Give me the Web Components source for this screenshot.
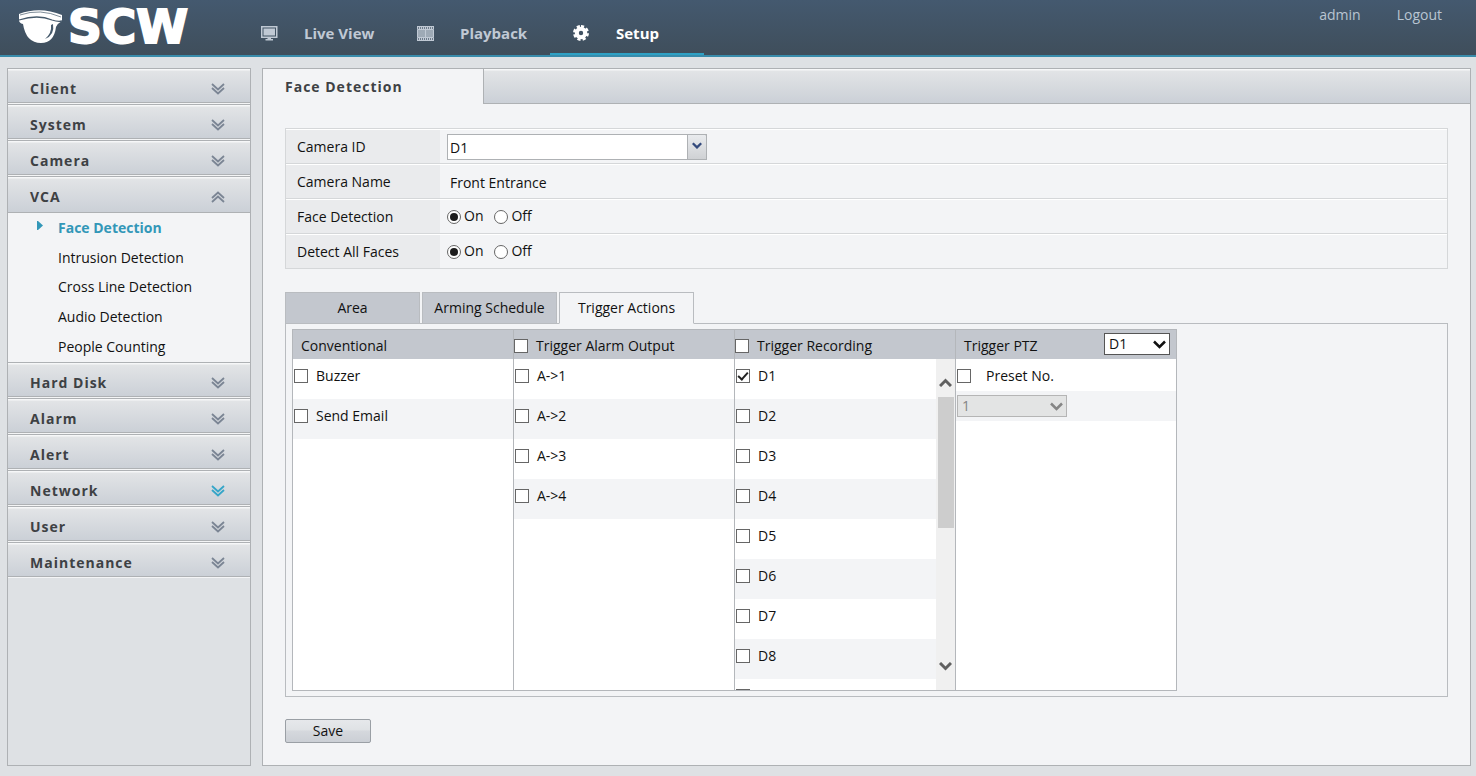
<!DOCTYPE html>
<html lang="en">
<head>
<meta charset="utf-8">
<title>Setup - Face Detection</title>
<style>
html, body { margin: 0; }
body {
  min-height: 100vh; display: flex; background: #dee1e4; color: #111;
  font: 14px/20px "Open Sans", "Noto Sans", sans-serif;
}
nvr-app { flex: 1; }
</style>
</head>
<body>
<nvr-app></nvr-app>
<script>
const define = (name, html, setup) => customElements.define(name, class extends HTMLElement {
  constructor() {
    super();
    const template = document.createElement('template');
    template.innerHTML = html;
    this.attachShadow({ mode: 'open' }).append(template.content.cloneNode(true));
  }
  connectedCallback() { if (setup) setup(this, this.shadowRoot); }
});

/* Brand: dome camera and wordmark */
define('brand-logo', `
<style>
:host { display: flex; align-items: center; gap: 4px; color: #fff; }
svg { display: block; }
span { font: bold 47px/46px "DejaVu Sans", sans-serif; -webkit-text-stroke: 2px #fff; }
</style>
<svg width="46" height="36" viewBox="0 0 46 36" aria-hidden="true">
  <path fill="#fff" d="M1 5Q22-3 44 6V12Q40 14 38 18Q36 34 23 34Q8 34 5 15Q1 14 1 11Z"/>
  <path fill="none" stroke="#465a6c" stroke-width="1.300" d="M1 11Q20 5 34 11Q40 13 44 12"/>
  <path fill="none" stroke="#465a6c" stroke-width=".7" d="M2 6Q22-1 43 8"/>
  <path fill="#465a6c" d="M35 15Q37 26 27 30Q34 24 33 16Z"/>
</svg>
<span>SCW</span>`);

const navIcons = {
  monitor: '<path fill="none" stroke="currentColor" stroke-width="1.500" d="M.75 1.75h15v10.500h-15z"/><path fill="currentColor" d="M2.500 3.500h11.500v7H2.500zM6.500 12h3.500v2H12v1.500H4.500V14h2z"/>',
  film: '<path fill="currentColor" opacity=".35" d="M0 2h17v13H0z"/><path fill="currentColor" opacity=".6" d="M1 5h7v7H1zM9 5h7v7H9z"/><path stroke="currentColor" stroke-width="2" stroke-dasharray="1 1" d="M0 3h17M0 14h17"/><path fill="none" stroke="currentColor" d="M.5 4.500h16v8H.5zM8.500 4.500v8M0 1.500h17M0 15.500h17"/>',
  gear: '<path fill="none" stroke="currentColor" stroke-width="3" stroke-dasharray="3 2.100" d="M8 1.500a6.500 6.500 0 1 1 0 13a6.500 6.500 0 1 1 0-13"/><circle cx="8" cy="8" r="4.200" fill="none" stroke="currentColor" stroke-width="4"/>'
};
define('nav-item', `
<style>
:host { display: block; width: 156px; color: #c0c9d4; }
:host([active]) { color: #fff; width: 154px; }
a {
  box-sizing: border-box; height: 55px; padding: 12px 0 0 23px; color: inherit; text-decoration: none;
  display: grid; grid-template-columns: 18px 1fr; column-gap: 25px; align-items: center;
  font-weight: bold; font-size: 15px; border-bottom: 2px solid transparent;
}
:host([active]) a { border-color: #2fa1c4; }
svg { display: block; margin-top: 2px; }
</style>
<a href="#"><svg width="18" height="18" viewBox="0 0 18 18" aria-hidden="true"></svg><slot></slot></a>`,
(el, root) => { root.querySelector('svg').innerHTML = navIcons[el.getAttribute('icon')]; });

define('top-bar', `
<style>
:host {
  display: flex; box-sizing: border-box; height: 57px; border-bottom: 2px solid #398cab;
  background: linear-gradient(#44596f, #3f4e5b);
}
brand-logo { width: 220px; padding-left: 18px; height: 54px; }
nav { flex: 1; display: flex; }
div { display: flex; gap: 36px; padding: 5px 34px 0 0; }
div a { color: #b9c5d2; text-decoration: none; }
</style>
<brand-logo></brand-logo>
<nav>
  <nav-item icon="monitor">Live View</nav-item>
  <nav-item icon="film">Playback</nav-item>
  <nav-item icon="gear" active>Setup</nav-item>
</nav>
<div><a href="#">admin</a><a href="#">Logout</a></div>`);

define('menu-section', `
<style>
:host { display: block; }
button {
  box-sizing: border-box; width: 100%; height: 36px; margin: 0; padding: 5px 25px 0 22px;
  display: flex; align-items: center; justify-content: space-between;
  border: 0; border-top: 1px solid #aeb1b4; border-bottom: 1px solid #f4f5f6;
  background: linear-gradient(#f6f7f8 1px, #e2e4e6 2px, #cbd0d7 33px, #aeb1b4 33px);
  color: #3e4144; font: bold 14px/20px "Open Sans", sans-serif; letter-spacing: 1px; text-align: left;
}
svg { display: block; color: #7b8594; }
:host([hot]) svg { color: #35a5c8; }
:host([open]) svg { transform: scaleY(-1); }
:host([open]) button { border-bottom: 0; background: linear-gradient(#f6f7f8 1px, #e2e4e6 2px, #cbd0d7 35px); }
ul {
  display: none; list-style: none; margin: 0; padding: 0; height: 149px;
  border-top: 1px solid #aeb1b4; background: #f3f4f6;
}
:host([open]) ul { display: flex; flex-direction: column; justify-content: space-around; }
</style>
<button type="button"><slot name="title"></slot>
<svg width="14" height="12" viewBox="0 0 14 12" fill="none" stroke="currentColor" stroke-width="1.800" aria-hidden="true"><path d="M1 1l6 5.500L13 1M1 5l6 5.500L13 5"/></svg></button>
<ul><slot></slot></ul>`);

define('menu-link', `
<style>
:host { display: block; }
li { display: block; }
a { display: grid; grid-template-columns: 21px 1fr; padding-left: 29px; color: #111; text-decoration: none; }
svg { visibility: hidden; margin-top: 3px; }
:host([current]) a { color: #3297b8; font-weight: bold; }
:host([current]) svg { visibility: visible; }
</style>
<li><a href="#"><svg width="6" height="9" viewBox="0 0 6 9" aria-hidden="true"><path fill="#3297b8" d="M0 0h1l5 4.500L1 9H0z"/></svg><slot></slot></a></li>`);

define('side-menu', `
<style>
:host { display: block; box-sizing: border-box; width: 244px; border: 1px solid #aeb1b4; border-top: 0; }
</style>
<menu-section><span slot="title">Client</span></menu-section>
<menu-section><span slot="title">System</span></menu-section>
<menu-section><span slot="title">Camera</span></menu-section>
<menu-section open><span slot="title">VCA</span>
  <menu-link current>Face Detection</menu-link>
  <menu-link>Intrusion Detection</menu-link>
  <menu-link>Cross Line Detection</menu-link>
  <menu-link>Audio Detection</menu-link>
  <menu-link>People Counting</menu-link>
</menu-section>
<menu-section><span slot="title">Hard Disk</span></menu-section>
<menu-section><span slot="title">Alarm</span></menu-section>
<menu-section><span slot="title">Alert</span></menu-section>
<menu-section hot><span slot="title">Network</span></menu-section>
<menu-section><span slot="title">User</span></menu-section>
<menu-section><span slot="title">Maintenance</span></menu-section>`);

define('form-row', `
<style>
:host { display: grid; grid-template-columns: 154px 1fr; height: 35px; box-sizing: border-box; border-bottom: 1px solid #d5d7d9; }
.name, .value { display: flex; align-items: center; border-top: 1px solid #fff; }
.name { padding-left: 11px; background: #eaebed; }
.value { padding-left: 7px; }
</style>
<div class="name"><slot name="label"></slot></div><div class="value"><slot></slot></div>`);

define('drop-down', `
<style>
:host { display: block; position: relative; width: 110px; height: 22px; color: #111; }
select {
  appearance: none; box-sizing: border-box; width: 100%; height: 100%; margin: 0; padding: 0 24px 0 4px;
  border: 1px solid #555; border-radius: 0; background: #fff; color: inherit;
  font: 14px/18px "Open Sans", sans-serif; opacity: 1;
}
i { position: absolute; top: 0; right: 0; bottom: 0; width: 22px; display: grid; place-items: center; pointer-events: none; }
:host([compact]) { width: 66px; }
:host([disabled]) { color: #858585; }
:host([disabled]) select { border-color: #b5b5b5; background: #e3e4e4; }
:host([combo]) { width: 260px; height: 26px; }
:host([combo]) select { border-color: #aeb1b4; padding-left: 2px; padding-top: 2px; }
:host([combo]) i {
  width: 20px; box-sizing: border-box; border: 1px solid #aeb1b4; border-top-right-radius: 2px;
  background: linear-gradient(#e9ebee, #cfd1d4); color: #334a7d; padding-bottom: 3px;
}
:host([combo]) svg { width: 10px; height: 7px; stroke-width: 3px; }
</style>
<select></select>
<i><svg width="13" height="9" viewBox="0 0 13 9" fill="none" stroke="currentColor" stroke-width="2.500" aria-hidden="true"><path d="M1 1.500l5.500 5.500L12 1.500"/></svg></i>`,
(el, root) => {
  const select = root.querySelector('select');
  select.setAttribute('aria-label', el.getAttribute('label'));
  select.disabled = el.hasAttribute('disabled');
  select.replaceChildren(new Option(el.getAttribute('value')));
});

define('on-off', `
<style>
:host { display: flex; gap: 11px; }
label { display: flex; align-items: center; gap: 3px; line-height: 18px; padding-bottom: 2px; }
input {
  appearance: none; box-sizing: border-box; width: 14px; height: 14px; margin: 2px 0 0;
  border: 1px solid #666; border-radius: 50%; background: #fff; display: grid; place-items: center;
}
input:checked::before { content: ""; width: 8px; height: 8px; border-radius: 50%; background: #1c1c1c; }
</style>
<label><input type="radio" name="state" checked>On</label>
<label><input type="radio" name="state">Off</label>`);

define('check-item', `
<style>
:host { display: block; }
label { display: flex; align-items: center; gap: var(--gap, 8px); }
input {
  appearance: none; box-sizing: border-box; flex: none; width: 14px; height: 14px; margin: 0;
  border: 1px solid #666; background: #fff; display: grid; place-items: center;
}
input:checked::before {
  content: ""; width: 8px; height: 4px; margin-bottom: 3px;
  border: solid #222; border-width: 0 0 2px 2px; transform: rotate(-48deg);
}
</style>
<label><input type="checkbox"><slot></slot></label>`,
(el, root) => { root.querySelector('input').checked = el.hasAttribute('checked'); });

define('action-column', `
<style>
:host { display: flex; flex-direction: column; min-width: 0; border-left: 1px solid #b4b7bb; }
header {
  height: 29px; box-sizing: border-box; padding: 3px 6px 0 0; background: #c3c7ce;
  display: flex; align-items: flex-start; justify-content: space-between;
}
.body { display: flex; height: 331px; overflow: hidden; background: #fff; }
.rows { flex: 1; min-width: 0; }
::slotted(check-item:not([slot])) { box-sizing: border-box; height: 40px; padding: 7px 0 0 1px; }
::slotted(check-item.alt) { background: #f3f4f6; }
::slotted(check-item[slot]) { padding-top: 3px; }
::slotted(span[slot]) { padding: 3px 0 0 8px; }
</style>
<header><slot name="title"></slot><slot name="tool"></slot></header>
<div class="body"><div class="rows"><slot></slot></div><slot name="bar"></slot></div>`);

define('scroll-bar', `
<style>
:host { display: flex; flex-direction: column; align-items: center; width: 19px; background: #f0f0f0; color: #606060; }
.thumb { width: 16px; height: 131px; background: #cdcdcd; }
svg { display: block; flex: none; margin: 19px 0 10px; }
.down { margin: auto 0 19px; transform: scaleY(-1); }
</style>
<svg width="13" height="9" viewBox="0 0 13 9" fill="none" stroke="currentColor" stroke-width="3" aria-hidden="true"><path d="M1 8l5.500-5.500L12 8"/></svg>
<div class="thumb"></div>
<svg class="down" width="13" height="9" viewBox="0 0 13 9" fill="none" stroke="currentColor" stroke-width="3" aria-hidden="true"><path d="M1 8l5.500-5.500L12 8"/></svg>`);

define('trigger-actions', `
<style>
:host {
  display: grid; grid-template-columns: repeat(4, 1fr); box-sizing: border-box;
  max-width: 885px; border: 1px solid #b4b7bb; border-left: 0;
}
.preset { --gap: 15px; height: 32px; }
.select { height: 30px; padding: 4px 0 0 1px; box-sizing: border-box; background: #f3f4f6; }
</style>
<action-column><span slot="title">Conventional</span>
  <check-item>Buzzer</check-item><check-item class="alt">Send Email</check-item>
</action-column>
<action-column><check-item slot="title">Trigger Alarm Output</check-item>
  <check-item>A-&gt;1</check-item><check-item class="alt">A-&gt;2</check-item>
  <check-item>A-&gt;3</check-item><check-item class="alt">A-&gt;4</check-item>
</action-column>
<action-column><check-item slot="title">Trigger Recording</check-item>
  <check-item checked>D1</check-item><check-item class="alt">D2</check-item>
  <check-item>D3</check-item><check-item class="alt">D4</check-item>
  <check-item>D5</check-item><check-item class="alt">D6</check-item>
  <check-item>D7</check-item><check-item class="alt">D8</check-item>
  <check-item>D9</check-item>
  <scroll-bar slot="bar"></scroll-bar>
</action-column>
<action-column><span slot="title">Trigger PTZ</span>
  <drop-down slot="tool" compact value="D1" label="Trigger PTZ camera"></drop-down>
  <check-item class="preset">Preset No.</check-item>
  <div class="select"><drop-down disabled value="1" label="Preset number"></drop-down></div>
</action-column>`);

define('tab-set', `
<style>
:host { display: block; }
.tabs { display: flex; gap: 2px; }
button {
  position: relative; box-sizing: border-box; min-width: 135px; height: 32px; margin: 0; padding: 0 8px;
  border: 1px solid #b9bcc0; background: #c3c7ce; color: #111; font: 14px/20px "Open Sans", sans-serif;
}
button[aria-selected=true] { background: #f3f4f6; border-bottom-color: #f3f4f6; }
.panel { border: 1px solid #b9bcc0; margin-top: -1px; padding: 5px 6px; }
</style>
<div class="tabs" role="tablist">
  <button type="button" role="tab" aria-selected="false">Area</button>
  <button type="button" role="tab" aria-selected="false">Arming Schedule</button>
  <button type="button" role="tab" aria-selected="true">Trigger Actions</button>
</div>
<div class="panel" role="tabpanel"><slot></slot></div>`);

define('setup-page', `
<style>
:host { display: block; box-sizing: border-box; min-width: 0; border: 1px solid #aeb1b4; background: #f3f4f6; }
.head { display: flex; height: 35px; }
h1 { box-sizing: border-box; width: 220px; margin: 0; padding: 8px 0 0 22px; font: bold 14px/20px "Open Sans", sans-serif; letter-spacing: 1px; color: #3e4144; }
.strip { flex: 1; box-sizing: border-box; border-left: 1px solid #aeb1b4; border-bottom: 1px solid #aeb1b4; background: linear-gradient(#f6f7f8 1px, #e2e4e6 2px, #cbd0d7); }
form { padding: 24px 22px 22px; }
.fields { border: 1px solid #d5d7d9; border-bottom: 0; margin-bottom: 23px; }
.text { padding: 2px 0 0 3px; }
.save {
  display: block; width: 86px; height: 24px; margin: 22px 0 0; padding: 0; border: 1px solid #9a9fa5; border-radius: 2px;
  background: linear-gradient(#e6e8eb, #dfe2e5 45%, #d5d8dd 50%, #cbcfd5); color: #111; font: 14px/20px "Open Sans", sans-serif;
}
</style>
<div class="head"><h1>Face Detection</h1><div class="strip"></div></div>
<form>
  <div class="fields">
    <form-row><span slot="label">Camera ID</span><drop-down combo value="D1" label="Camera ID"></drop-down></form-row>
    <form-row><span slot="label">Camera Name</span><span class="text">Front Entrance</span></form-row>
    <form-row><span slot="label">Face Detection</span><on-off role="group" aria-label="Face Detection"></on-off></form-row>
    <form-row><span slot="label">Detect All Faces</span><on-off role="group" aria-label="Detect All Faces"></on-off></form-row>
  </div>
  <tab-set><trigger-actions></trigger-actions></tab-set>
  <button class="save" type="button">Save</button>
</form>`);

define('nvr-app', `
<style>
:host { display: flex; flex-direction: column; min-width: 0; }
main { flex: 1; display: flex; gap: 11px; padding: 11px 5px 10px 7px; }
setup-page { flex: 1; }
</style>
<top-bar></top-bar>
<main><side-menu></side-menu><setup-page></setup-page></main>`);
</script>
</body>
</html>
